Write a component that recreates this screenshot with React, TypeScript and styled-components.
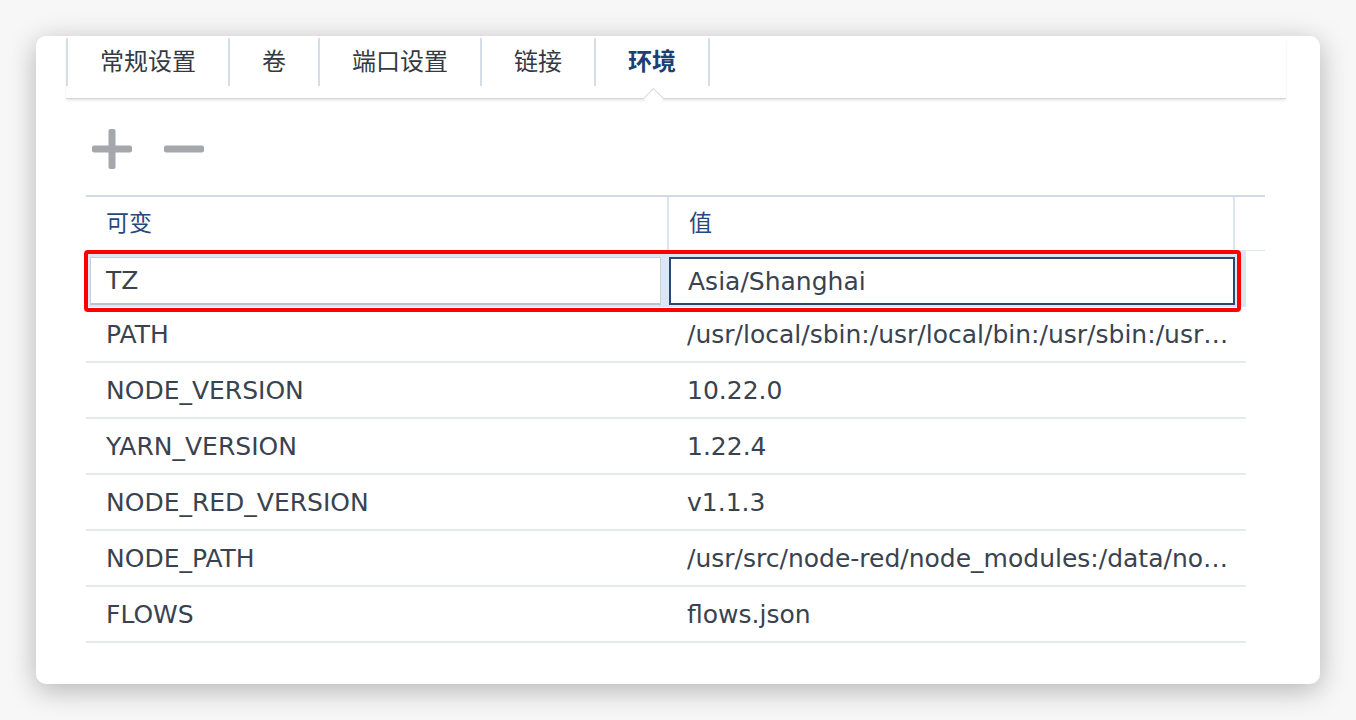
import React from 'react';
import styled, {createGlobalStyle} from 'styled-components';

const GlobalStyle = createGlobalStyle`
  html, body {
    margin: 0;
    padding: 0;
    background: #ffffff;
  }
  body {
    font-family: "DejaVu Sans", "Noto Sans CJK SC", sans-serif;
  }
`;

const Page = styled.div`
  width: 1356px;
  height: 720px;
  padding: 36px 36px 0 36px;
  box-sizing: border-box;
  background: #f7f7f7;
`;

const Card = styled.div`
  width: 1284px;
  height: 648px;
  box-sizing: border-box;
  background: #ffffff;
  border-radius: 10px;
  box-shadow: 0 6px 28px rgba(0, 0, 0, 0.28);
  padding: 2px 34px 0 30px;
`;

const TabBar = styled.div`
  display: flex;
  height: 61px;
  box-sizing: border-box;
  border-bottom: 1px solid #d3d7dc;
  box-shadow: 0 2px 3px -1px rgba(0, 0, 0, 0.14);
`;

const Tab = styled.div<{active?: boolean}>`
  position: relative;
  height: 48px;
  box-sizing: border-box;
  display: flex;
  align-items: center;
  padding: 0 32px 5px;
  border-left: 2px solid #d5dee8;
  font-family: "Noto Sans CJK SC", sans-serif;
  font-size: 24px;
  color: ${p => (p.active ? '#1d3f72' : '#333a42')};
  font-weight: ${p => (p.active ? 700 : 400)};
  &:last-child {
    border-right: 2px solid #d5dee8;
  }
  ${p => p.active && `
    &::after {
      content: "";
      position: absolute;
      left: 50%;
      bottom: -20px;
      width: 14px;
      height: 14px;
      margin-left: -6px;
      background: #ffffff;
      border-top: 1px solid #d3d7dc;
      border-left: 1px solid #d3d7dc;
      transform: rotate(45deg);
    }
  `}
`;

const Content = styled.div`
  padding: 30px 21px 0 20px;
`;

const Toolbar = styled.div`
  display: flex;
  align-items: center;
  gap: 32px;
  height: 40px;
  padding-left: 6px;
  margin-bottom: 26px;
`;

const IconButton = styled.button`
  width: 40px;
  height: 40px;
  padding: 0;
  border: none;
  background: transparent;
  display: flex;
  align-items: center;
  justify-content: center;
`;

const HeaderRow = styled.div`
  display: grid;
  grid-template-columns: 581px 566px 1fr;
  border-top: 2px solid #d0dae6;
  border-bottom: 1px solid #dfe6ee;
  box-sizing: border-box;
  height: 56px;
`;

const HeaderCell = styled.div`
  display: flex;
  align-items: center;
  padding: 0 0 5px 20px;
  font-family: "Noto Sans CJK SC", sans-serif;
  font-size: 23px;
  color: #27487b;
  & + & {
    border-left: 2px solid #dde5ee;
  }
`;

const Body = styled.div`
  margin-right: 19px;
`;

const Row = styled.div`
  display: grid;
  grid-template-columns: 581px 1fr;
  height: 56px;
  border-bottom: 2px solid #e6eaef;
  box-sizing: border-box;
`;

const Cell = styled.div`
  display: flex;
  align-items: center;
  min-width: 0;
  padding: 0 12px 0 20px;
  font-size: 25px;
  color: #39434f;
  > span {
    overflow: hidden;
    white-space: nowrap;
    text-overflow: ellipsis;
  }
`;

const EditRow = styled.div`
  position: relative;
  display: grid;
  grid-template-columns: 571px 1fr;
  column-gap: 8px;
  height: 56px;
  box-sizing: border-box;
  padding: 6px 11px 2px 4px;
  background: #dbe7f4;
`;

const Editor = styled.div<{focused?: boolean}>`
  display: flex;
  align-items: center;
  box-sizing: border-box;
  background: #ffffff;
  padding-left: ${p => (p.focused ? 17 : 15)}px;
  font-size: 25px;
  color: #39434f;
  border: ${p => (p.focused ? '2px solid #2a4773' : '1px solid #c8d0d9')};
  border-bottom-width: 2px;
  border-bottom-color: ${p => (p.focused ? '#2a4773' : '#b9c3ce')};
`;

const Highlight = styled.div`
  position: absolute;
  top: -1px;
  left: -2px;
  right: 5px;
  bottom: -5px;
  border: 4px solid #ff0000;
  border-radius: 4px;
  pointer-events: none;
`;

function PlusIcon() {
  return (
    <svg width="40" height="40" viewBox="0 0 40 40">
      <rect x="0" y="16.5" width="40" height="7" rx="2" fill="#a4a7ac" />
      <rect x="16.5" y="0" width="7" height="40" rx="2" fill="#a4a7ac" />
    </svg>
  );
}

function MinusIcon() {
  return (
    <svg width="40" height="40" viewBox="0 0 40 40">
      <rect x="0" y="16.5" width="40" height="7" rx="2" fill="#a4a7ac" />
    </svg>
  );
}

const tabs = ['常规设置', '卷', '端口设置', '链接', '环境'];

const envs = [
  ['PATH', '/usr/local/sbin:/usr/local/bin:/usr/sbin:/usr/bin:/sbin:/bin'],
  ['NODE_VERSION', '10.22.0'],
  ['YARN_VERSION', '1.22.4'],
  ['NODE_RED_VERSION', 'v1.1.3'],
  ['NODE_PATH', '/usr/src/node-red/node_modules:/data/node_modules'],
  ['FLOWS', 'flows.json'],
];

export default function App() {
  return (
    <Page>
      <GlobalStyle />
      <Card>
        <TabBar>
          {tabs.map(t => (
            <Tab key={t} active={t === '环境'}>{t}</Tab>
          ))}
        </TabBar>
        <Content>
          <Toolbar>
            <IconButton><PlusIcon /></IconButton>
            <IconButton><MinusIcon /></IconButton>
          </Toolbar>
          <HeaderRow>
            <HeaderCell>可变</HeaderCell>
            <HeaderCell>值</HeaderCell>
            <HeaderCell />
          </HeaderRow>
          <Body>
            <EditRow>
              <Editor>TZ</Editor>
              <Editor focused>Asia/Shanghai</Editor>
              <Highlight />
            </EditRow>
            {envs.map(([k, v]) => (
              <Row key={k}>
                <Cell><span>{k}</span></Cell>
                <Cell><span>{v}</span></Cell>
              </Row>
            ))}
          </Body>
        </Content>
      </Card>
    </Page>
  );
}
